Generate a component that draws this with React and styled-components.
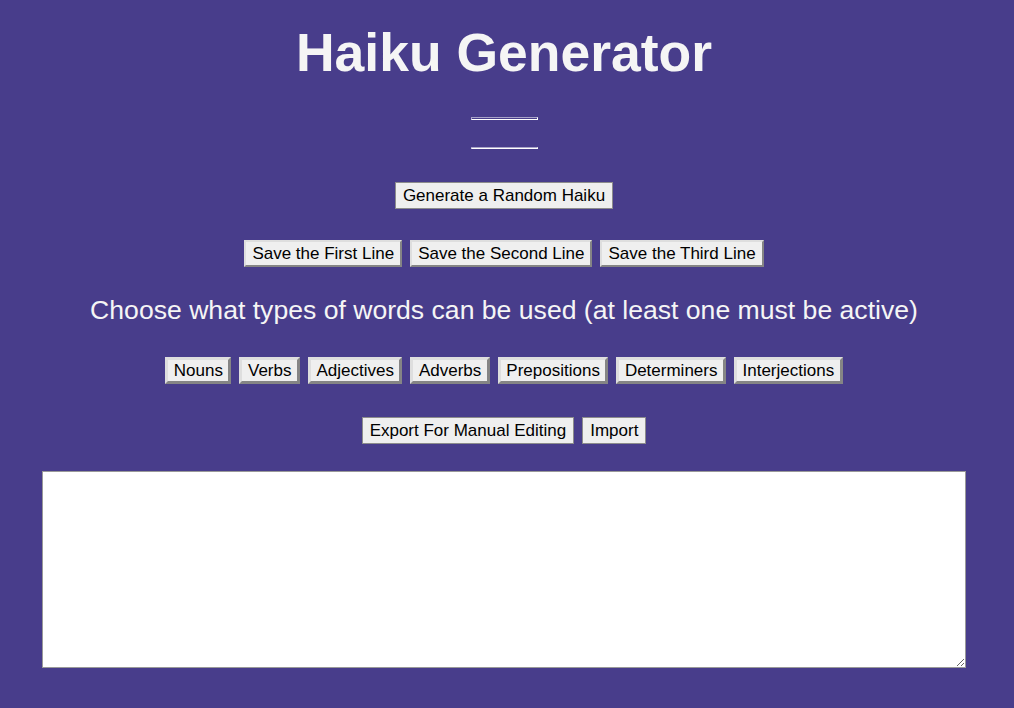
import React from "react";
import styled, { createGlobalStyle } from "styled-components";

const GlobalStyle = createGlobalStyle`
  html, body {
    margin: 0;
    padding: 0;
    background-color: #483d8b;
  }
  body {
    font-family: "Liberation Sans", Arial, sans-serif;
    min-height: 708px;
  }
`;

const Page = styled.div`
  display: flex;
  flex-direction: column;
  align-items: center;
  min-height: 708px;
  padding-right: 6px;
  color: whitesmoke;
`;

const Title = styled.h1`
  margin: 22px 0 0;
  font-size: 53.5px;
  font-weight: bold;
  line-height: 1.149;
  color: whitesmoke;
`;

const HaikuLine = styled.div`
  width: 65px;
  height: ${({ $tall }) => ($tall ? "1px" : "0")};
  margin-top: ${({ $gap }) => $gap}px;
  border: 1px solid;
  border-color: #a9a4c9 #ffffff #ffffff #a9a4c9;
  box-sizing: content-box;
`;

const Row = styled.div`
  display: flex;
  justify-content: center;
  gap: 8px;
  margin-top: ${({ $gap }) => $gap}px;
`;

const Button = styled.button`
  box-sizing: border-box;
  height: 27px;
  font-family: "Liberation Sans", Arial, sans-serif;
  font-size: 17px;
  line-height: 1.149;
  color: #000;
  background-color: #efefef;
  padding: 0 ${({ $bevel }) => ($bevel === 3 ? 5.5 : $bevel ? 6 : 7)}px;
  margin: 0;
  border-radius: 0;
  border-style: solid;
  border-width: ${({ $bevel }) => $bevel || 1}px;
  border-color: ${({ $bevel }) =>
    $bevel ? "#dedede #858585 #858585 #dedede" : "#8c8c8c"};
  cursor: pointer;
`;

const Prompt = styled.h2`
  margin: 28px 0 0;
  font-size: 26.6px;
  font-weight: normal;
  line-height: 1.149;
  color: whitesmoke;
`;

const Editor = styled.textarea`
  display: block;
  width: 924px;
  height: 197px;
  box-sizing: border-box;
  margin-top: 27px;
  border: 1px solid #999;
  background: #fff;
  font-family: "Liberation Mono", monospace;
  font-size: 13px;
  resize: both;
`;

const lines = ["Save the First Line", "Save the Second Line", "Save the Third Line"];
const wordTypes = [
  "Nouns",
  "Verbs",
  "Adjectives",
  "Adverbs",
  "Prepositions",
  "Determiners",
  "Interjections",
];

export default function App() {
  return (
    <>
      <GlobalStyle />
      <Page>
        <Title>Haiku Generator</Title>
        <HaikuLine $tall $gap={34} />
        <HaikuLine $gap={27} />
        <Row $gap={33}>
          <Button>Generate a Random Haiku</Button>
        </Row>
        <Row $gap={31}>
          {lines.map((l) => (
            <Button key={l} $bevel={2}>
              {l}
            </Button>
          ))}
        </Row>
        <Prompt>Choose what types of words can be used (at least one must be active)</Prompt>
        <Row $gap={31}>
          {wordTypes.map((w) => (
            <Button key={w} $bevel={3}>
              {w}
            </Button>
          ))}
        </Row>
        <Row $gap={33}>
          <Button>Export For Manual Editing</Button>
          <Button>Import</Button>
        </Row>
        <Editor />
      </Page>
    </>
  );
}
